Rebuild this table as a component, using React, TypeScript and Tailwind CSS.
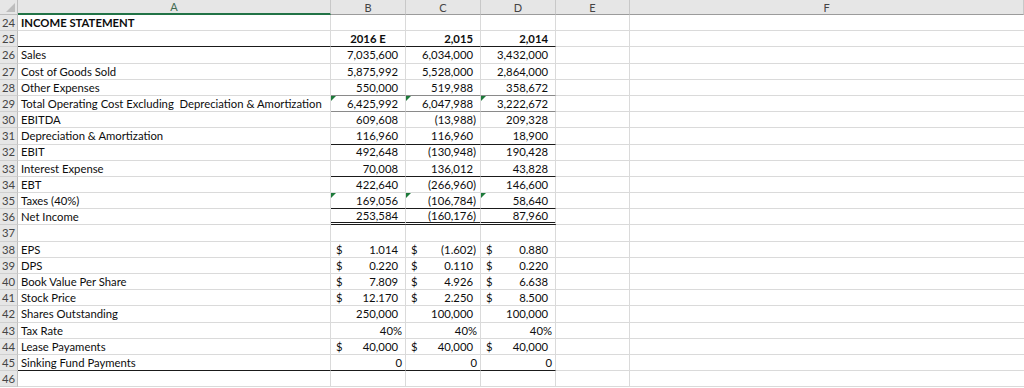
import React from "react";

type Val = { t: string; cur?: boolean; neg?: boolean; pad?: "acct" | "gen" | "center"; bold?: boolean };

type Row = {
  n: number;
  label?: string;
  bold?: boolean;
  vals?: Val[];
  line?: "black" | "gray" | "double";
  lineA?: boolean;
  flag?: boolean;
};

const v = (t: string, cur = false): Val => ({ t, cur, neg: t.startsWith("(") });

const rows: Row[] = [
  { n: 24, label: "INCOME STATEMENT", bold: true },
  {
    n: 25,
    vals: [
      { t: "2016 E", bold: true, pad: "center" },
      { t: "2,015", bold: true },
      { t: "2,014", bold: true },
    ],
    line: "black",
    lineA: true,
  },
  { n: 26, label: "Sales", vals: [v("7,035,600"), v("6,034,000"), v("3,432,000")] },
  { n: 27, label: "Cost of Goods Sold", vals: [v("5,875,992"), v("5,528,000"), v("2,864,000")] },
  { n: 28, label: "Other Expenses", vals: [v("550,000"), v("519,988"), v("358,672")], line: "gray" },
  {
    n: 29,
    label: "Total Operating Cost Excluding  Depreciation & Amortization",
    vals: [v("6,425,992"), v("6,047,988"), v("3,222,672")],
    line: "gray",
    flag: true,
  },
  { n: 30, label: "EBITDA", vals: [v("609,608"), v("(13,988)"), v("209,328")] },
  { n: 31, label: "Depreciation & Amortization", vals: [v("116,960"), v("116,960"), v("18,900")], line: "black" },
  { n: 32, label: "EBIT", vals: [v("492,648"), v("(130,948)"), v("190,428")] },
  { n: 33, label: "Interest Expense", vals: [v("70,008"), v("136,012"), v("43,828")], line: "black" },
  { n: 34, label: "EBT", vals: [v("422,640"), v("(266,960)"), v("146,600")] },
  { n: 35, label: "Taxes (40%)", vals: [v("169,056"), v("(106,784)"), v("58,640")], line: "black", flag: true },
  { n: 36, label: "Net Income", vals: [v("253,584"), v("(160,176)"), v("87,960")], line: "double" },
  { n: 37 },
  { n: 38, label: "EPS", vals: [v("1.014", true), v("(1.602)", true), v("0.880", true)] },
  { n: 39, label: "DPS", vals: [v("0.220", true), v("0.110", true), v("0.220", true)] },
  { n: 40, label: "Book Value Per Share", vals: [v("7.809", true), v("4.926", true), v("6.638", true)] },
  { n: 41, label: "Stock Price", vals: [v("12.170", true), v("2.250", true), v("8.500", true)] },
  { n: 42, label: "Shares Outstanding", vals: [v("250,000"), v("100,000"), v("100,000")] },
  {
    n: 43,
    label: "Tax Rate",
    vals: [
      { t: "40%", pad: "gen" },
      { t: "40%", pad: "gen" },
      { t: "40%", pad: "gen" },
    ],
  },
  { n: 44, label: "Lease Payaments", vals: [v("40,000", true), v("40,000", true), v("40,000", true)] },
  {
    n: 45,
    label: "Sinking Fund Payments",
    vals: [
      { t: "0", pad: "gen" },
      { t: "0", pad: "gen" },
      { t: "0", pad: "gen" },
    ],
    line: "black",
    lineA: true,
  },
  { n: 46 },
];

const grid = "grid grid-cols-[18px_313px_75px_75px_75px_74px_1fr]";

function bottomLine(line?: Row["line"]) {
  if (line === "black") return "border-b border-b-[#1a1a1a]";
  if (line === "gray") return "border-b border-b-[#8a8a8a]";
  if (line === "double") return "border-b-[3px] border-b-[#1a1a1a] [border-bottom-style:double]";
  return "border-b border-b-[#dadada]";
}

function ValueCell({ val, line, flag }: { val?: Val; line?: Row["line"]; flag?: boolean }) {
  let inner: React.ReactNode = null;
  if (val) {
    const pr = val.pad === "gen" ? "pr-[3px]" : val.neg ? "pr-[4px]" : "pr-[7px]";
    if (val.pad === "center") {
      inner = <span className="w-full text-center">{val.t}</span>;
    } else {
      inner = (
        <div className="flex w-full justify-between">
          <span className="pl-[5px]">{val.cur ? "$" : ""}</span>
          <span className={pr}>{val.t}</span>
        </div>
      );
    }
  }
  return (
    <div
      className={`relative flex items-center border-r border-r-[#dadada] ${bottomLine(line)} ${
        val?.bold ? "font-bold" : ""
      }`}
    >
      {flag && (
        <span className="absolute left-0 top-0 h-0 w-0 border-t-[5px] border-r-[5px] border-t-[#1d7a3a] border-r-transparent" />
      )}
      {inner}
    </div>
  );
}

export default function App() {
  return (
    <div
      className="h-[388px] w-[1024px] overflow-hidden bg-white text-[11.3px] leading-none text-[#0d0d0d]"
      style={{ fontFamily: "Lato, 'Open Sans', sans-serif" }}
    >
      {/* column headers */}
      <div className={`${grid} h-[15px] bg-[#e6e6e6] text-[11px] text-[#444]`}>
        <div className="relative border-r border-b border-[#bdbdbd]">
          <svg className="absolute right-[2px] bottom-[2px]" width="9" height="9" viewBox="0 0 9 9">
            <polygon points="9,0 9,9 0,9" fill="#bdbdbd" />
          </svg>
        </div>
        <div className="flex items-center justify-center border-r border-r-[#c8c8c8] border-b-2 border-b-[#217346] text-[#3f6b4f]">
          A
        </div>
        {["B", "C", "D", "E", "F"].map((c) => (
          <div
            key={c}
            className="flex items-center justify-center border-r border-r-[#c8c8c8] border-b border-b-[#9b9b9b]"
          >
            {c}
          </div>
        ))}
      </div>

      {rows.map((r) => (
        <div key={r.n} className={`${grid} h-[16.2px]`}>
          <div className="flex items-center justify-center border-r border-r-[#bdbdbd] border-b border-b-[#d0d0d0] bg-[#e6e6e6] text-[#444]">
            {r.n}
          </div>
          <div
            className={`flex items-center pl-[3px] border-r border-r-[#dadada] ${
              r.lineA ? bottomLine(r.line) : "border-b border-b-[#dadada]"
            } ${r.bold ? "font-bold" : ""}`}
          >
            <span className="whitespace-pre">{r.label}</span>
          </div>
          {[0, 1, 2].map((i) => (
            <ValueCell key={i} val={r.vals?.[i]} line={r.line} flag={r.flag} />
          ))}
          <div className="border-r border-b border-[#dadada]" />
          <div className="border-b border-b-[#dadada]" />
        </div>
      ))}
    </div>
  );
}
